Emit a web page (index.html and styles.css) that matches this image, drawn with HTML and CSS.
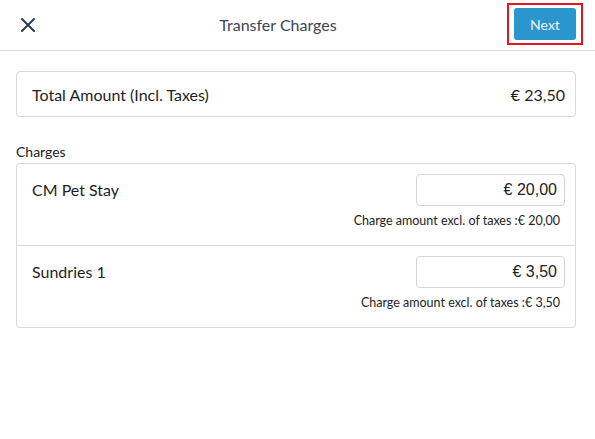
FILE: index.html
```html
<!DOCTYPE html>
<html>
<head>
<meta charset="utf-8">
<link rel="stylesheet" href="styles.css">
</head>
<body>
<header class="topbar">
  <button class="close" aria-label="Close">
    <svg width="14" height="14" viewBox="0 0 14 14"><path d="M1 1L13 13M13 1L1 13" stroke="#2f3b4b" stroke-width="2" stroke-linecap="square" fill="none"/></svg>
  </button>
  <h1 class="title">Transfer Charges</h1>
  <span class="highlight"><button class="next">Next</button></span>
</header>
<main class="content">
  <div class="card total">
    <span>Total Amount (Incl. Taxes)</span>
    <span>€ 23,50</span>
  </div>
  <div class="section-label">Charges</div>
  <div class="card charges">
    <div class="row">
      <div class="name">CM Pet Stay</div>
      <div class="amount">
        <input class="amount-input" type="text" value="€ 20,00">
        <div class="note">Charge amount excl. of taxes :€ 20,00</div>
      </div>
    </div>
    <div class="row">
      <div class="name">Sundries 1</div>
      <div class="amount">
        <input class="amount-input" type="text" value="€ 3,50">
        <div class="note">Charge amount excl. of taxes :€ 3,50</div>
      </div>
    </div>
  </div>
</main>
</body>
</html>
```
FILE: styles.css
```css
* { box-sizing: border-box; }
body {
  margin: 0;
  font-family: Lato, "Open Sans", sans-serif;
  color: #222;
  background: #fff;
}
.topbar {
  height: 51px;
  border-bottom: 1px solid #dcdcdc;
  display: flex;
  align-items: center;
  padding: 0 12px 0 21px;
}
.close {
  border: 0;
  background: none;
  padding: 0;
  width: 14px;
  height: 14px;
  display: flex;
  margin-top: -1px;
  flex: none;
}
.title {
  flex: 1;
  margin: 0 0 2px 14px;
  line-height: 47px;
  text-align: center;
  font-size: 16px;
  font-weight: 400;
  color: #3a4555;
}
.highlight {
  display: flex;
  flex: none;
  border: 2px solid #e8141a;
  padding: 3px 5px;
  margin-top: -2px;
}
.next {
  width: 62px;
  height: 32px;
  border: 0;
  border-radius: 3px;
  background: #2a96cd;
  color: #eaf4fa;
  font-family: Lato, sans-serif;
  font-size: 14px;
}
.content {
  padding: 20px 19px 0 16px;
}
.card {
  border: 1px solid #d9d9d9;
  border-radius: 4px;
  background: #fff;
}
.total {
  height: 46px;
  display: flex;
  align-items: center;
  justify-content: space-between;
  padding: 0 10px 0 15px;
  font-size: 16px;
  color: #1e1e1e;
}
.section-label {
  margin-top: 26px;
  font-size: 14px;
  line-height: 17px;
  margin-bottom: 3px;
  color: #222;
}
.row {
  height: 81px;
  display: flex;
  justify-content: space-between;
  padding: 10px 10px 0 15px;
}
.row + .row {
  height: 82px;
  border-top: 1px solid #d9d9d9;
}
.name {
  font-size: 16px;
  line-height: 32px;
  color: #1e1e1e;
}
.amount {
  display: flex;
  flex-direction: column;
  align-items: flex-end;
}
.amount-input {
  width: 149px;
  height: 32px;
  border: 1px solid #d4d4d4;
  border-radius: 4px;
  text-align: right;
  padding: 0 7px;
  font-family: "Liberation Sans", Arial, sans-serif;
  font-size: 16px;
  color: #222;
}
.note {
  margin-top: 7px;
  margin-right: 5px;
  font-size: 12.5px;
  line-height: 15px;
  color: #222;
}
```
